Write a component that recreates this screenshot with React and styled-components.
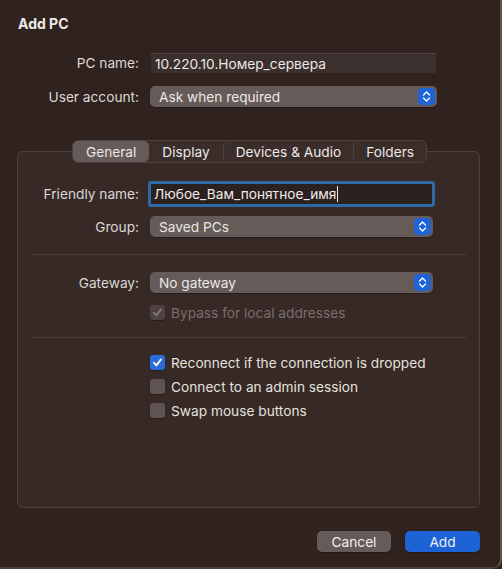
import React from "react";
import styled, { createGlobalStyle } from "styled-components";

const GlobalStyle = createGlobalStyle`
  html, body {
    margin: 0;
    padding: 0;
    background: #2f221f;
  }
  * {
    box-sizing: border-box;
  }
`;

const Window = styled.div`
  width: 502px;
  height: 569px;
  background: #2f221f;
  border-right: 2px solid #5d5452;
  border-bottom: 2px solid #4a403e;
  border-bottom-right-radius: 10px;
  font-family: Inter, "Noto Sans", sans-serif;
  font-size: 13.7px;
  color: #e6e1df;
  display: flex;
  flex-direction: column;
`;

const Title = styled.h1`
  margin: 0;
  padding: 15px 0 0 18px;
  font-size: 14px;
  font-weight: 700;
  line-height: 18px;
  color: #ece8e6;
`;

const Form = styled.div`
  display: flex;
  flex-direction: column;
  gap: ${(p) => p.gap || 13}px;
  padding: ${(p) => p.pad};
`;

const Row = styled.div`
  display: grid;
  grid-template-columns: ${(p) => p.label}px 1fr;
  column-gap: 11px;
  align-items: center;
  margin-top: ${(p) => p.mt || 0}px;
`;

const Label = styled.span`
  text-align: right;
  color: #ddd8d6;
  white-space: nowrap;
`;

const TextField = styled.div`
  height: 20px;
  background: #3b302d;
  border-top: 1px solid #4b413e;
  padding: 0 4px;
  display: flex;
  align-items: center;
  margin-right: ${(p) => p.mr || 0}px;
  margin-left: 1px;
  color: #ece8e6;
`;

const FocusField = styled.div`
  height: 26px;
  margin-left: -2px;
  margin-right: ${(p) => p.mr || 0}px;
  border: 3px solid #2f6aa6;
  border-radius: 3px;
  background: #2c211f;
  padding: 0 3px;
  display: flex;
  align-items: center;
  color: #f0ecea;
`;

const Caret = styled.span`
  display: inline-block;
  width: 1px;
  height: 16px;
  background: #f0ecea;
  margin-left: 1px;
`;

const Popup = styled.div`
  height: 21px;
  background: #655b58;
  border-radius: 5px;
  display: flex;
  align-items: center;
  justify-content: space-between;
  padding: 0 2px 0 9px;
  margin-right: ${(p) => p.mr || 0}px;
  color: #ece8e6;
  box-shadow: 0 1px 1px rgba(0, 0, 0, 0.25);
`;

const Stepper = styled.span`
  width: 17px;
  height: 17px;
  border-radius: 4px;
  background: #1f63d8;
  display: flex;
  align-items: center;
  justify-content: center;
`;

const TabsWrap = styled.div`
  display: flex;
  flex-direction: column;
  align-items: center;
  margin: 33px 20px 0 17px;
`;

const Tabs = styled.div`
  display: flex;
  align-items: center;
  height: 23px;
  margin-bottom: -12px;
  margin-left: 2px;
  position: relative;
  z-index: 1;
  background: #3a2d2a;
  border: 1px solid #4d423f;
  border-radius: 6px;
`;

const Tab = styled.span`
  height: 21px;
  padding: 0 ${(p) => p.px}px;
  display: flex;
  align-items: center;
  border-radius: 5px;
  background: ${(p) => (p.active ? "#655b58" : "transparent")};
  color: #ece8e6;
  border-left: ${(p) => (p.sep ? "1px solid #4d423f" : "none")};
  white-space: nowrap;
`;

const Panel = styled.div`
  width: 100%;
  height: 357px;
  background: #362926;
  border: 1px solid #4d423f;
  border-radius: 6px;
  padding: 29px 0 0 0;
`;

const Separator = styled.div`
  height: 1px;
  background: #4a3f3c;
  margin: ${(p) => p.m};
`;

const CheckRow = styled.label`
  display: flex;
  align-items: center;
  gap: 6px;
  height: 15px;
  margin-left: ${(p) => p.ml}px;
  margin-top: ${(p) => p.mt || 0}px;
  color: ${(p) => (p.disabled ? "#7a6f6c" : "#e6e1df")};
`;

const Box = styled.span`
  width: 15px;
  height: 15px;
  border-radius: 3px;
  flex: none;
  display: flex;
  align-items: center;
  justify-content: center;
  background: ${(p) =>
    p.checked ? (p.disabled ? "#4d423f" : "#2a6bdc") : "#5f5552"};
  box-shadow: 0 1px 1px rgba(0, 0, 0, 0.3);
`;

const Footer = styled.div`
  display: flex;
  justify-content: flex-end;
  gap: 14px;
  margin: 23px 20px 0 0;
`;

const Button = styled.button`
  width: ${(p) => (p.primary ? 75 : 74)}px;
  height: 21px;
  border: none;
  border-radius: 5px;
  font-family: inherit;
  font-size: 13.7px;
  color: #f2eeec;
  background: ${(p) => (p.primary ? "#1d63d6" : "#655b58")};
  box-shadow: 0 1px 1px rgba(0, 0, 0, 0.25);
  padding: 0;
`;

const Chevrons = () => (
  <svg width="9" height="13" viewBox="0 0 9 13" fill="none">
    <path
      d="M1.5 5L4.5 2L7.5 5M1.5 8L4.5 11L7.5 8"
      stroke="#fff"
      strokeWidth="1.4"
      strokeLinecap="round"
      strokeLinejoin="round"
    />
  </svg>
);

const Check = ({ color }) => (
  <svg width="11" height="11" viewBox="0 0 11 11" fill="none">
    <path
      d="M2 5.8L4.4 8.4L9 2.4"
      stroke={color}
      strokeWidth="1.8"
      strokeLinecap="round"
      strokeLinejoin="round"
    />
  </svg>
);

const Select = ({ value, mr }) => (
  <Popup mr={mr}>
    <span>{value}</span>
    <Stepper>
      <Chevrons />
    </Stepper>
  </Popup>
);

const Checkbox = ({ checked, disabled, children, ml, mt }) => (
  <CheckRow ml={ml} mt={mt} disabled={disabled}>
    <Box checked={checked} disabled={disabled}>
      {checked && <Check color={disabled ? "#847a77" : "#fff"} />}
    </Box>
    {children}
  </CheckRow>
);

const App = () => {
  return (
    <>
      <GlobalStyle />
      <Window>
        <Title>Add PC</Title>
        <Form pad="20px 0 0 0">
          <Row label={139}>
            <Label>PC name:</Label>
            <TextField mr={64}>10.220.10.Номер_сервера</TextField>
          </Row>
          <Row label={139}>
            <Label>User account:</Label>
            <Select value="Ask when required" mr={63} />
          </Row>
        </Form>

        <TabsWrap>
          <Tabs>
            <Tab active px={13}>General</Tab>
            <Tab px={13}>Display</Tab>
            <Tab px={12} sep>Devices &amp; Audio</Tab>
            <Tab px={12} sep>Folders</Tab>
          </Tabs>
          <Panel>
            <Form gap={9}>
              <Row label={121}>
                <Label>Friendly name:</Label>
                <FocusField mr={44}>
                  Любое_Вам_понятное_имя
                  <Caret />
                </FocusField>
              </Row>
              <Row label={121}>
                <Label>Group:</Label>
                <Select value="Saved PCs" mr={46} />
              </Row>
            </Form>
            <Separator m="17px 13px 0 14px" />
            <Row label={121} mt={17}>
              <Label>Gateway:</Label>
              <Select value="No gateway" mr={46} />
            </Row>
            <Checkbox checked disabled ml={132} mt={12}>
              Bypass for local addresses
            </Checkbox>
            <Separator m="17px 13px 0 14px" />
            <Checkbox checked ml={132} mt={17}>
              Reconnect if the connection is dropped
            </Checkbox>
            <Checkbox ml={132} mt={9}>
              Connect to an admin session
            </Checkbox>
            <Checkbox ml={132} mt={9}>
              Swap mouse buttons
            </Checkbox>
          </Panel>
        </TabsWrap>

        <Footer>
          <Button>Cancel</Button>
          <Button primary>Add</Button>
        </Footer>
      </Window>
    </>
  );
};

export default App;
